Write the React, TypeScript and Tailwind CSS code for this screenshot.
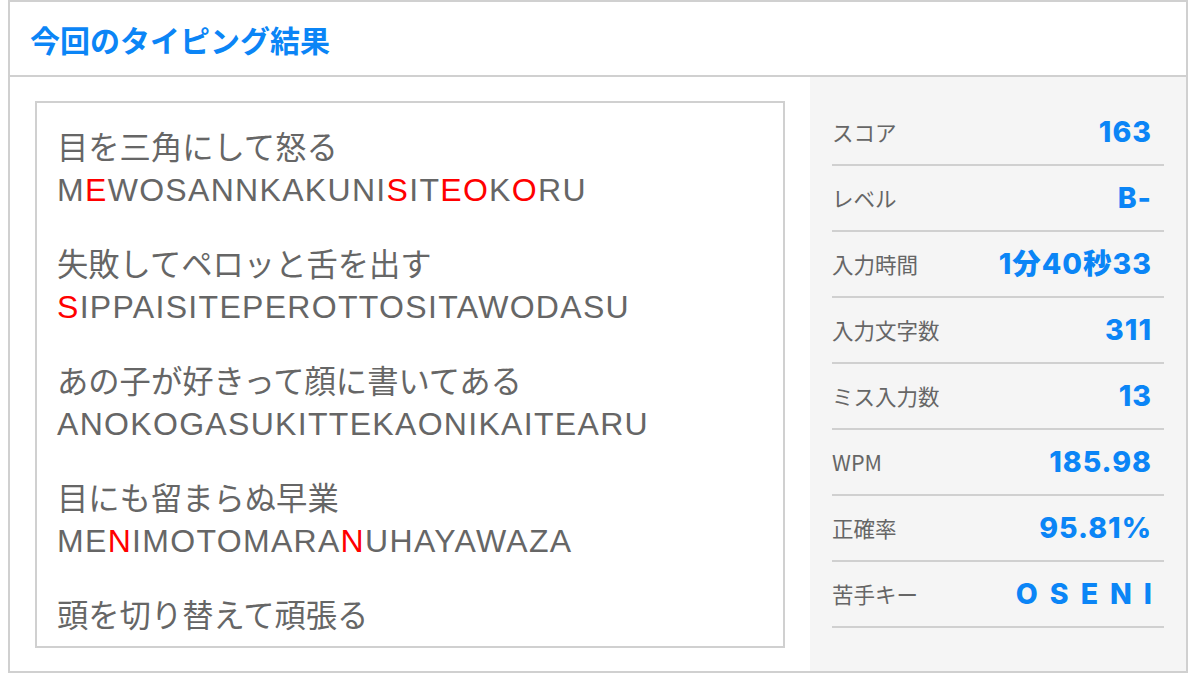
import React from 'react'

type Line = { ja: string; ro?: string; miss: number[] }

const lines: Line[] = [
  { ja: '目を三角にして怒る', ro: 'MEWOSANNKAKUNISITEOKORU', miss: [1, 14, 17, 18, 20] },
  { ja: '失敗してペロッと舌を出す', ro: 'SIPPAISITEPEROTTOSITAWODASU', miss: [0] },
  { ja: 'あの子が好きって顔に書いてある', ro: 'ANOKOGASUKITTEKAONIKAITEARU', miss: [] },
  { ja: '目にも留まらぬ早業', ro: 'MENIMOTOMARANUHAYAWAZA', miss: [2, 12] },
  { ja: '頭を切り替えて頑張る', miss: [] },
]

const stats = [
  { label: 'スコア', value: '163' },
  { label: 'レベル', value: 'B-' },
  { label: '入力時間', value: '1分40秒33' },
  { label: '入力文字数', value: '311' },
  { label: 'ミス入力数', value: '13' },
  { label: 'WPM', value: '185.98' },
  { label: '正確率', value: '95.81%' },
]

function Romaji({ text, miss }: { text: string; miss: number[] }) {
  return (
    <div className="tracking-[1.3px] font-['Liberation_Sans',sans-serif]">
      {text.split('').map((c, i) => (
        <span key={i} className={miss.includes(i) ? 'text-[#ff0000]' : ''}>
          {c}
        </span>
      ))}
    </div>
  )
}

export default function App() {
  return (
    <div className="bg-white w-[1192px] h-[680px]">
      <div className="ml-[8px] w-[1180px] h-[673px] border-2 border-[#d0d0d0] flex flex-col">
        {/* Header */}
        <div className="h-[75px] border-b-2 border-[#d0d0d0] flex items-center px-[20px]">
          <h1 className="text-[30px] font-bold text-[#0b85f6] font-['Noto_Sans_CJK_JP',sans-serif] leading-none">
            今回のタイピング結果
          </h1>
        </div>

        <div className="flex flex-1 min-h-0">
          {/* Typed lines */}
          <div className="w-[800px] pl-[25px] pr-[25px] pt-[24px] pb-[23px]">
            <div className="h-full border-2 border-[#d0d0d0] overflow-hidden px-[20px] pt-[20px] text-[#666666] text-[32px] leading-[45px] font-['Liberation_Sans','Noto_Sans_CJK_JP',sans-serif]">
              {lines.map((l, i) => (
                <div key={i} className="mb-[27px]">
                  <div className="font-['Noto_Sans_CJK_JP',sans-serif] text-[31.3px]">{l.ja}</div>
                  {l.ro && <Romaji text={l.ro} miss={l.miss} />}
                </div>
              ))}
            </div>
          </div>

          {/* Stats */}
          <div className="flex-1 bg-[#f5f5f5] pt-[23px] pl-[22px] pr-[22px]">
            {stats.map((s) => (
              <div
                key={s.label}
                className="h-[66px] border-b-2 border-[#d0d0d0] flex items-center justify-between pr-[12px]"
              >
                <span className="text-[21.5px] text-[#666666] font-['Noto_Sans_CJK_JP',sans-serif]">
                  {s.label}
                </span>
                <span className="text-[28.5px] font-extrabold text-[#0b85f6] tracking-[1px] font-['Inter','Noto_Sans_CJK_JP',sans-serif]">
                  {s.value}
                </span>
              </div>
            ))}
            <div className="h-[66px] border-b-2 border-[#d0d0d0] flex items-center justify-between pr-[12px]">
              <span className="text-[21.5px] text-[#666666] font-['Noto_Sans_CJK_JP',sans-serif]">苦手キー</span>
              <span className="flex gap-[12px] text-[28.5px] font-extrabold text-[#0b85f6] font-['Inter',sans-serif]">
                {'OSENI'.split('').map((c, i) => (
                  <span key={i}>{c}</span>
                ))}
              </span>
            </div>
          </div>
        </div>
      </div>
    </div>
  )
}
